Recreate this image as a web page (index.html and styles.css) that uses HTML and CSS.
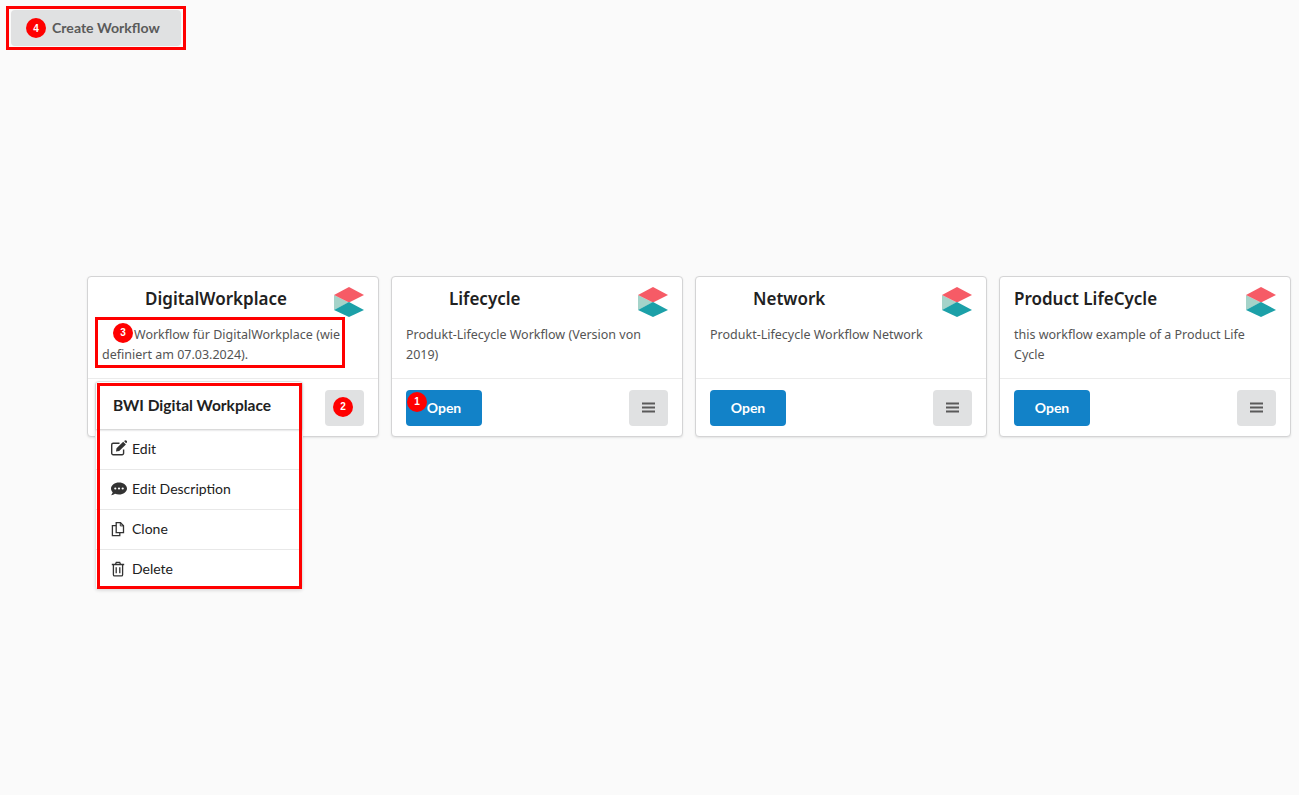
FILE: index.html
```html
<!DOCTYPE html>
<html lang="en">
<head>
<meta charset="utf-8">
<title>Workflows</title>
<link rel="stylesheet" href="styles.css">
</head>
<body>
<svg class="defs" width="0" height="0" aria-hidden="true">
  <symbol id="logo" viewBox="0 0 30 30">
    <polygon points="0,8 15,15.500 0,23" fill="#a5d3c9"/>
    <polygon points="0,8 15,0 30,8 15,15.500" fill="#f65b66"/>
    <polygon points="0,23 15,15 30,23 15,30" fill="#1ca0a8"/>
  </symbol>
  <symbol id="bars" viewBox="0 0 13 11">
    <path d="M0 .5h13v2H0zM0 4.500h13v2H0zM0 8.500h13v2H0z" fill="currentColor"/>
  </symbol>
</svg>
<header class="topbar">
  <div class="create-frame">
    <button class="create-btn"><span class="badge">4</span>Create Workflow</button>
  </div>
</header>
<main class="cards">
  <article class="card">
    <div class="card-body">
      <div class="card-head">
        <h2 class="title title-indented">DigitalWorkplace</h2>
        <svg class="logo"><use href="#logo"/></svg>
      </div>
      <p class="desc desc-outlined"><span class="badge badge-inline">3</span>Workflow für DigitalWorkplace (wie definiert am 07.03.2024).</p>
    </div>
    <div class="card-foot">
      <button class="open-btn">Open</button>
      <button class="menu-btn"><span class="badge badge-menu">2</span></button>
    </div>
    <div class="dropdown">
      <div class="dropdown-title">BWI Digital Workplace</div>
      <div class="dropdown-item">
        <svg class="ico" viewBox="0 0 16 16"><path d="M12.600 9.500v3.700a1.500 1.500 0 0 1-1.500 1.500H2.200A1.500 1.500 0 0 1 .7 13.200V4.800a1.500 1.500 0 0 1 1.500-1.500h6.300" fill="none" stroke="currentColor" stroke-width="1.400"/><path d="M5.500 8.300 12.200 1.700 14.900 4.400 8.200 11 5 11.500z M13 1 14 .4a1 1 0 0 1 1.200 0l.7.700a1 1 0 0 1 0 1.300l-.9.900z" fill="currentColor"/></svg>
        Edit
      </div>
      <div class="dropdown-item">
        <svg class="ico" viewBox="0 0 16 16"><path d="M8 1.500C3.600 1.500 0 4.200 0 7.500c0 1.400.7 2.700 1.700 3.700-.3 1.200-1.100 2.200-1.700 3 1.600 0 3-.6 4-1.400 1.200.4 2.600.7 4 .7 4.400 0 8-2.700 8-6S12.400 1.500 8 1.500z" fill="currentColor"/><circle cx="4.300" cy="7.500" r="1.100" fill="#fff"/><circle cx="8" cy="7.500" r="1.100" fill="#fff"/><circle cx="11.700" cy="7.500" r="1.100" fill="#fff"/></svg>
        Edit Description
      </div>
      <div class="dropdown-item">
        <svg class="ico" viewBox="0 0 16 16"><path d="M5.200 1.700h4.300l3 3v7h-7.300z" fill="none" stroke="currentColor" stroke-width="1.300"/><path d="M5.200 4.700H1.400v10h7.400v-3" fill="none" stroke="currentColor" stroke-width="1.300"/><path d="M9.300 1.700v3.200h3.200" fill="none" stroke="currentColor" stroke-width="1"/></svg>
        Clone
      </div>
      <div class="dropdown-item">
        <svg class="ico" viewBox="0 0 16 16"><path d="M2.400 3.800v9.900a1.200 1.200 0 0 0 1.200 1.200h6.800a1.200 1.200 0 0 0 1.200-1.200V3.800M.8 3.500h12.400M4.500 3.300l.8-2h3.400l.8 2M5.200 6.300v6M8.800 6.300v6" fill="none" stroke="currentColor" stroke-width="1.300"/></svg>
        Delete
      </div>
    </div>
  </article>
  <article class="card">
    <div class="card-body">
      <div class="card-head">
        <h2 class="title title-indented">Lifecycle</h2>
        <svg class="logo"><use href="#logo"/></svg>
      </div>
      <p class="desc">Produkt-Lifecycle Workflow (Version von 2019)</p>
    </div>
    <div class="card-foot">
      <button class="open-btn"><span class="badge badge-open">1</span>Open</button>
      <button class="menu-btn"><svg class="bars"><use href="#bars"/></svg></button>
    </div>
  </article>
  <article class="card">
    <div class="card-body">
      <div class="card-head">
        <h2 class="title title-indented">Network</h2>
        <svg class="logo"><use href="#logo"/></svg>
      </div>
      <p class="desc">Produkt-Lifecycle Workflow Network</p>
    </div>
    <div class="card-foot">
      <button class="open-btn">Open</button>
      <button class="menu-btn"><svg class="bars"><use href="#bars"/></svg></button>
    </div>
  </article>
  <article class="card">
    <div class="card-body">
      <div class="card-head">
        <h2 class="title">Product LifeCycle</h2>
        <svg class="logo"><use href="#logo"/></svg>
      </div>
      <p class="desc">this workflow example of a Product Life Cycle</p>
    </div>
    <div class="card-foot">
      <button class="open-btn">Open</button>
      <button class="menu-btn"><svg class="bars"><use href="#bars"/></svg></button>
    </div>
  </article>
</main>
</body>
</html>
```
FILE: styles.css
```css
* { box-sizing: border-box; }
html, body { margin: 0; padding: 0; }
body {
  background: #fafafa;
  font-family: "Noto Sans", sans-serif;
  color: #212529;
  height: 795px;
  overflow: hidden;
}
.defs { display: block; height: 0; }
.topbar { padding: 6px 0 0 6px; height: 276px; }
button { font-family: Lato, sans-serif; border: 0; cursor: pointer; }
.create-frame {
  display: inline-block;
  padding: 1px 2px;
  border: 3px solid #f00;
}
.create-btn {
  display: flex;
  align-items: center;
  width: 170px;
  height: 36px;
  padding: 0 0 2px 15px;
  background: #e0e1e2;
  color: #5a5a5a;
  font-size: 14.1px;
  font-weight: 700;
  border-radius: 4px;
}
.create-btn .badge { margin: 2px 6px 0 0; }
.badge {
  display: inline-flex;
  align-items: center;
  justify-content: center;
  width: 20px;
  height: 20px;
  border-radius: 50%;
  background: #f00;
  color: #fff;
  font-family: "Liberation Sans", sans-serif;
  font-size: 10px;
  font-weight: 700;
  flex: none;
}
.cards {
  display: flex;
  gap: 12px;
  padding-left: 87px;
}
.card {
  position: relative;
  width: 292px;
  height: 161px;
  display: flex;
  flex-direction: column;
  background: #fff;
  border: 1px solid #d4d4d5;
  border-radius: 4px;
  box-shadow: 0 1px 2px rgba(34,36,38,.1);
}
.card-body { height: 102px; padding: 11px 14px 0; border-bottom: 1px solid #ebebeb; }
.card-head { display: flex; justify-content: space-between; align-items: flex-start; height: 37px; }
.title {
  margin: 0;
  font-size: 17px;
  font-weight: 600;
  line-height: 22px;
  color: #212121;
}
.title-indented { margin-left: 43px; }
.logo { width: 30px; height: 30px; flex: none; margin-top: -1px; }
.desc {
  position: relative;
  margin: 0;
  font-size: 12.5px;
  line-height: 20px;
  color: #545454;
}
.desc-outlined { text-indent: 32px; width: 241px; }
.desc-outlined::after {
  content: "";
  position: absolute;
  left: -7px;
  right: -2px;
  top: -8px;
  bottom: -3px;
  border: 3px solid #f00;
}
.badge-inline { position: absolute; left: 11px; top: -2px; text-indent: 0; }
.card-foot {
  flex: 1;
  display: flex;
  justify-content: space-between;
  align-items: center;
  padding: 0 14px;
}
.open-btn {
  position: relative;
  width: 76px;
  height: 36px;
  background: #1282c8;
  color: #fff;
  font-size: 14px;
  font-weight: 700;
  border-radius: 4px;
}
.badge-open { position: absolute; left: 1px; top: 2px; }
.menu-btn {
  width: 39px;
  height: 36px;
  display: flex;
  align-items: center;
  justify-content: center;
  padding: 0;
  background: #e0e1e2;
  color: #5a5a5a;
  border-radius: 4px;
}
.badge-menu { margin: -2px 3px 0 0; }
.bars { width: 13px; height: 11px; }
.dropdown {
  position: absolute;
  left: 7px;
  top: 104px;
  width: 208px;
  background: #fff;
  border: 1px solid #e3e3e3;
  border-radius: 4px;
  box-shadow: 0 1px 3px rgba(34,36,38,.12);
  font-family: Lato, sans-serif;
  color: #212121;
  font-size: 14px;
}
.dropdown::after {
  content: "";
  position: absolute;
  inset: 1px 0 0 1px;
  border: 3px solid #f00;
  pointer-events: none;
}
.dropdown-title {
  height: 47px;
  padding: 0 0 2px 17px;
  display: flex;
  align-items: center;
  font-size: 15.500px;
  font-weight: 700;
  box-shadow: 0 1px 2px rgba(34,36,38,.25);
  position: relative;
}
.dropdown-item {
  height: 40px;
  display: flex;
  align-items: center;
  gap: 5px;
  padding: 0 0 2px 15px;
  border-top: 1px solid #e8e8e8;
}
.dropdown-title + .dropdown-item { border-top: 0; }
.ico { width: 16px; height: 16px; flex: none; color: #333; }
```
